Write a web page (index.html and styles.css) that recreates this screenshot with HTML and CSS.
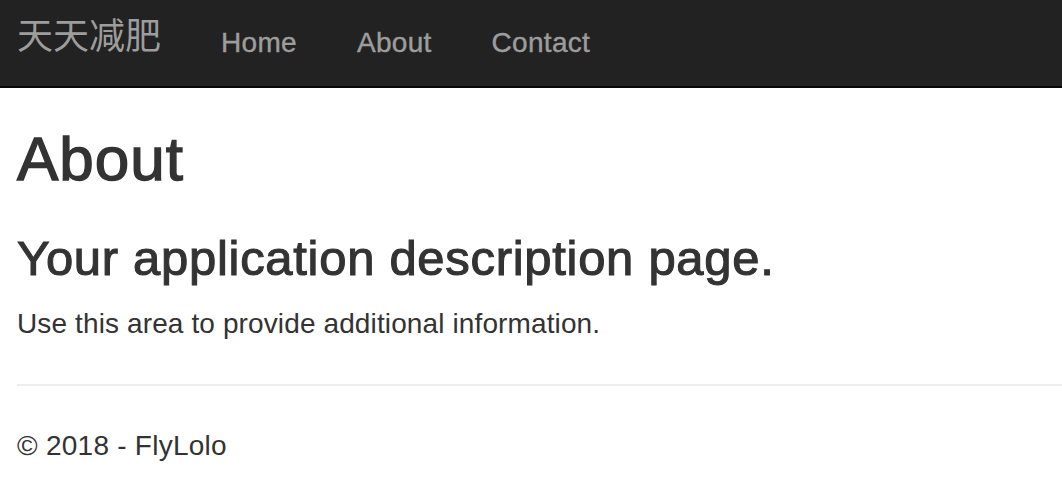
FILE: index.html
```html
<!DOCTYPE html>
<html lang="zh">
<head>
<meta charset="utf-8">
<title>About - 天天减肥</title>
<link rel="stylesheet" href="styles.css">
</head>
<body>
<nav class="navbar">
  <a class="brand" href="#">天天减肥</a>
  <ul class="nav">
    <li><a href="#">Home</a></li>
    <li><a href="#">About</a></li>
    <li><a href="#">Contact</a></li>
  </ul>
</nav>
<main class="content">
  <h1 class="title">About</h1>
  <h2 class="message">Your application description page.</h2>
  <p class="text">Use this area to provide additional information.</p>
  <hr class="rule">
  <footer class="footer">
    <p class="text">© 2018 - FlyLolo</p>
  </footer>
</main>
</body>
</html>
```
FILE: styles.css
```css
html, body {
  margin: 0;
  padding: 0;
  background: #fff;
}
body {
  font-family: "Liberation Sans", Arial, "Noto Sans CJK SC", sans-serif;
  color: #333;
}
a { text-decoration: none; }

.navbar {
  display: flex;
  align-items: flex-start;
  height: 86px;
  background: #222;
  border-bottom: 2px solid #080808;
  padding-left: 17px;
}
.brand {
  font-family: "Noto Sans CJK SC", sans-serif;
  font-size: 36px;
  line-height: 40px;
  padding-top: 13px;
  padding-right: 30px;
  color: #9d9d9d;
}
.nav {
  display: flex;
  list-style: none;
  margin: 0;
  padding: 0;
}
.nav a {
  display: block;
  font-size: 28px;
  line-height: 40px;
  letter-spacing: 0.3px;
  padding: 23px 30px 0;
  color: #9d9d9d;
  -webkit-text-stroke: 0.4px #9d9d9d;
}

.content {
  padding-left: 17px;
}
.title {
  font-size: 62px;
  font-weight: 500;
  line-height: 1.1;
  letter-spacing: 1px;
  margin: 37px 0 0;
  -webkit-text-stroke: 1.4px #333;
}
.message {
  font-size: 49px;
  font-weight: 500;
  line-height: 1.1;
  letter-spacing: 0.7px;
  margin: 39px 0 0;
  -webkit-text-stroke: 1.1px #333;
}
.text {
  font-size: 28px;
  line-height: 40px;
  letter-spacing: 0.12px;
  margin: 18px 0 0;
}
.rule {
  border: 0;
  border-top: 2px solid #eee;
  margin: 40px 0 0;
}
.footer .text {
  margin-top: 40px;
  letter-spacing: 0.25px;
}
```
